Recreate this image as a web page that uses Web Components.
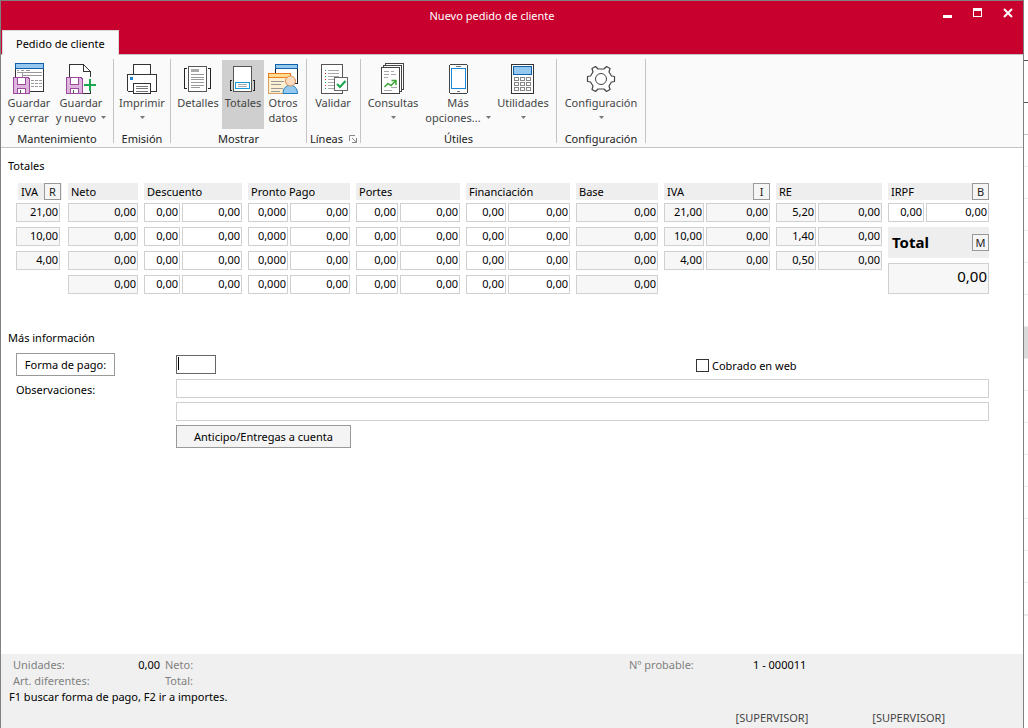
<!DOCTYPE html>
<html lang="es">
<head>
<meta charset="utf-8">
<title>Nuevo pedido de cliente</title>
<style>
  html, body { margin: 0; height: 100%; }
  body { font: 11px/15px "Noto Sans", "Open Sans", sans-serif; color: #000; background: #fff; }
</style>
</head>
<body>
<order-window></order-window>

<script>
const define = (name, html, init) => {
  const tpl = document.createElement('template');
  tpl.innerHTML = html;
  customElements.define(name, class extends HTMLElement {
    constructor() {
      super();
      this.attachShadow({ mode: 'open' }).append(tpl.content.cloneNode(true));
    }
    connectedCallback() {
      if (init && !this.ready) { this.ready = true; init(this, this.shadowRoot); }
    }
  });
};

/* ---------- icons ---------- */
const floppy = (x) => `<g transform="translate(${x} 14)">
  <path d="M.5 .5H15L16.500 2V16.500H.5Z" fill="#deb5dc" stroke="#9b4a9d"/>
  <path d="M4.500 .5V7.500H12.500V.5Z" fill="#fff" stroke="#9b4a9d"/>
  <path d="M4.500 16.500V11.500H12.500V16.500Z" fill="#fff" stroke="#9b4a9d"/>
  <path d="M7.500 16V13" stroke="#555" fill="none"/></g>`;
const ICONS = {
  saveClose: `<path d="M2.500 5.500H30.500V28.500H2.500Z" fill="#fff" stroke="#333"/>
    <path d="M2.500 .5H30.500V5.500H2.500Z" fill="#94c8ee" stroke="#0f61ab"/>
    <path d="M4 7.500H6M8 7.500H11M13 7.500H17M4 9.500H29M9 12.500H29" stroke="#999"/>
    <path d="M9.500 10V14" stroke="#999"/><path d="M18 17.500H29M18 20.500H29M18 23.500H29" stroke="#999" stroke-dasharray="3 1"/>${floppy(0)}`,
  saveNew: `<path d="M4.500 24V1.500H18.500L25.500 8.500V30.500H18" fill="#fff" stroke="#333"/>
    <path d="M18.500 1.500V8.500H25.500" fill="none" stroke="#333"/>
    <path d="M20 14H32V30H20Z" fill="#fafafa"/><path d="M25.500 9V14M18 30.500H25.500V28" stroke="#333" fill="none"/>
    ${floppy(1)}
    <path d="M25 16V28M19 22H31" stroke="#19a84f" stroke-width="2"/>`,
  print: `<path d="M7.500 11V1.500H24.500V11" fill="#fff" stroke="#333"/>
    <path d="M1.500 11.500H30.500V29.500H1.500Z" fill="#fff" stroke="#333"/>
    <path d="M0 28H32V32H0Z" fill="#fafafa"/><path d="M1.500 28.500H30.500" stroke="#333"/>
    <path d="M4 14H7V17H4Z" fill="#1c86d6"/>
    <path d="M7.500 20.500H24.500V30.500H7.500Z" fill="#fff" stroke="#333"/>
    <path d="M10 23.500H22M10 25.500H22M10 28.500H22" stroke="#777"/>`,
  details: `<path d="M6.500 3.500H24.500V28.500H6.500Z" fill="#fff" stroke="#555"/>
    <path d="M9 6H17V9H9Z" fill="#aaa"/>
    <path d="M9 11.500H22M9 14.500H22M9 16.500H22M9 19.500H22M9 22.500H22M9 24.500H18" stroke="#999"/>
    <path d="M5 5.500H2.500V25.500H5M26 5.500H28.500V25.500H26" fill="none" stroke="#222"/>`,
  totals: `<path d="M6.500 3.500H24.500V28.500H6.500Z" fill="#fff" stroke="#555"/>
    <path d="M8.500 19.500H22.500V25.500H8.500Z" fill="#fff" stroke="#159bdc"/>
    <path d="M11 21.500H20M11 23.500H20" stroke="#aaa"/>
    <path d="M5 17.500H3.500V27.500H5M26 17.500H27.500V27.500H26" fill="none" stroke="#222"/>`,
  other: `<path d="M8.500 4.500H30.500V20.500H8.500Z" fill="#fff" stroke="#222"/>
    <path d="M8.500 1.500H30.500V5.500H8.500Z" fill="#94c8ee" stroke="#0f61ab"/>
    <path d="M1.500 13.500H22.500V30.500H1.500Z" fill="#fdf0d2" stroke="#d9a066"/>
    <path d="M1.500 10.500H23.500V14.500H1.500Z" fill="#ffdc91" stroke="#ea7d1e"/>
    <path d="M4 18.500H17M4 21.500H14M4 25.500H16M4 28.500H13" stroke="#999"/>
    <g shape-rendering="auto"><path d="M16 30.500C16 19.500 30.500 19.500 30.500 30.500Z" fill="#94c8ee" stroke="#1c7cc0"/>
    <circle cx="23.500" cy="18" r="5" fill="#fbdcc0" stroke="#d98f5c"/></g>`,
  validate: `<path d="M25.500 14V1.500H4.500V30.500H25.500V28" fill="#fff" stroke="#555"/>
    <path d="M11 7.500H22M11 10.500H22M11 13.500H22M11 16.500H17M11 19.500H17M11 22.500H17M11 25.500H17" stroke="#aaa"/>
    <path d="M8 7.500H9M8 13.500H9M8 19.500H9M8 25.500H9" stroke="#19a84f"/><path d="M8 10.500H9M8 16.500H9M8 22.500H9" stroke="#d02a2a"/>
    <path d="M17.500 14.500H30.500V27.500H17.500Z" fill="#fff" stroke="#666"/>
    <path d="M20 21L23 24L28.500 18" stroke="#19a84f" stroke-width="2" fill="none" shape-rendering="auto"/>`,
  queries: `<path d="M8.500 .5H26.500V26.500H8.500Z" fill="#fff" stroke="#444"/>
    <path d="M6.500 2.500H24.500V28.500H6.500Z" fill="#fff" stroke="#444"/>
    <path d="M4.500 4.500H22.500V30.500H4.500Z" fill="#fff" stroke="#444"/>
    <path d="M7 8.500H12M14 8.500H17M7 11.500H12M14 11.500H19M7 14.500H11M7 27.500H15M14 24.500H20" stroke="#aaa"/>
    <g shape-rendering="auto"><path d="M7.500 24L11 20.500L14 22.500L19 17.500M14.500 17.500H19V22" fill="none" stroke="#3fa535" stroke-width="1.500"/></g>`,
  phone: `<rect x="7.500" y="1.500" width="18" height="29" rx="2" fill="#fff" stroke="#444"/>
    <path d="M9.500 5.500H23.500V25.500H9.500Z" fill="#fff" stroke="#1c86d6"/>
    <path d="M14 3.500H19M15 28.500H18" stroke="#777"/>`,
  calc: `<path d="M4.500 1.500H26.500V30.500H4.500Z" fill="#fff" stroke="#333"/>
    <path d="M6.500 3.500H24.500V11.500H6.500Z" fill="#94c8ee" stroke="#0f61ab"/>
    ${[14, 19, 24].map(y => [7, 13, 19].map(x => `<path d="M${x}.5 ${y}.5h4v3h-4Z" fill="#fff" stroke="#888"/>`).join('')).join('')}`,
  gear: `<g shape-rendering="auto" fill="none" stroke="#444">
    <path d="M10.500 3.500L7 5.500L8 9L5.500 13L2.500 13.500V18.500L5.500 19L8 23L7 26.500L10.500 28.500L13 26H19L21.500 28.500L25 26.500L24 23L26.500 19L29.500 18.500V13.500L26.500 13L24 9L25 5.500L21.500 3.500L19 6H13Z" fill="#fff" stroke-width="1.200" stroke-linejoin="round"/><circle cx="16" cy="16" r="5.500"/></g>`
};

/* ---------- title bar ---------- */
define('title-bar', `
<style>
  :host { display: grid; grid-template-columns: 1fr auto 1fr 40px; height: 29px; background: #c8002d; color: #fff; line-height: 29px; }
  h1 { margin: 0; font: inherit; grid-column: 2; }
  .tools { grid-column: 3 / 5; justify-self: end; display: flex; }
  button { width: 30px; height: 24px; padding: 0; border: 0; background: none; color: #fff; }
  svg { display: block; margin: auto; }
</style>
<h1><slot></slot></h1>
<div class="tools">
  <button aria-label="Minimizar"><svg width="10" height="10"><path d="M0 7H9V10H0Z" fill="#fff"/></svg></button>
  <button aria-label="Maximizar"><svg width="10" height="10"><path d="M0 0H9V9H0ZM1 3V8H8V3Z" fill="#fff" fill-rule="evenodd"/></svg></button>
  <button aria-label="Cerrar"><svg width="10" height="10"><path d="M1 1L9 9M9 1L1 9" stroke="#fff" stroke-width="2"/></svg></button>
</div>`);

/* ---------- ribbon ---------- */
define('ribbon-tabs', `
<style>
  :host { display: flex; height: 24px; background: #c8002d; padding-left: 1px; border-bottom: 1px solid #c4c4c4; }
  button { box-sizing: border-box; height: 25px; margin-bottom: -1px; padding: 0 13px; font: inherit; color: #000; background: #fafafa; border: 1px solid #d8d8d8; border-bottom: 0; }
</style>
<button role="tab" aria-selected="true"><slot></slot></button>`);

define('ribbon-bar', `
<style>
  :host { display: flex; height: 92px; background: #fafafa; border-bottom: 1px solid #c4c4c4; }
</style><slot></slot>`);

define('ribbon-group', `
<style>
  :host { display: flex; flex-direction: column; align-items: center; box-sizing: border-box; height: 88px; margin-top: 4px; padding: 1px 4px 0 3px;
    background: linear-gradient(#c4c4c4, #c4c4c4) right top / 1px 84px no-repeat; }
  .items { display: flex; flex: none; align-self: flex-start; height: 70px; }
  .caption { display: flex; flex: none; align-items: center; gap: 6px; height: 17px; line-height: 17px; color: #222; }
  button { padding: 0; border: 0; background: none; height: 8px; display: none; }
  :host([launcher]) button { display: block; }
  svg { display: block; }
</style>
<div class="items"><slot></slot></div>
<div class="caption"><span></span><button aria-label="Más opciones del grupo"><svg width="8" height="8"><path d="M.5 6V.5H6M3 3L7 7M7.500 3V7.500H3" fill="none" stroke="#888"/></svg></button></div>`,
(el, root) => { root.querySelector('span').textContent = el.getAttribute('label'); });

define('ribbon-button', `
<style>
  :host { display: block; width: var(--w, 52px); }
  button { display: flex; flex-direction: column; align-items: center; width: 100%; height: 69px; padding: 3px 0 0; border: 0; background: none; font: inherit; color: #444; white-space: nowrap; }
  :host([active]) button { background: #cfcfcf; }
  svg { display: block; flex: none; }
  .line { display: flex; align-items: center; justify-content: center; height: 15px; gap: 5px; }
  .arrow { display: none; }
  :host([menu]) .arrow { display: block; }
</style>
<button><svg class="icon" width="32" height="32" viewBox="0 0 32 32" fill="none" shape-rendering="crispEdges"></svg>
<span class="line"><slot></slot></span>
<span class="line"><slot name="second"></slot><svg class="arrow" width="5" height="3"><path d="M0 0H5L2.500 3Z" fill="#777"/></svg></span></button>`,
(el, root) => {
  root.querySelector('.icon').innerHTML = ICONS[el.getAttribute('icon')];
  if (el.hasAttribute('active')) root.querySelector('button').setAttribute('aria-pressed', 'true');
});

/* ---------- form pieces ---------- */
define('key-button', `
<style>
  :host { display: block; }
  button { display: block; box-sizing: border-box; width: 17px; height: 17px; padding: 0; border: 1px solid #999; background: #f5f5f5; font: inherit; line-height: 14px; color: #222; }
</style><button><slot></slot></button>`);

/* A titled column of amounts; rows are separated by "|" and cells by a space. */
define('amount-column', `
<style>
  :host { display: block; min-width: 0; }
  .head { display: flex; justify-content: space-between; align-items: center; height: 17px; margin-bottom: 3px; background: #eee; padding-left: 3px; white-space: nowrap; }
  .row { display: flex; gap: 2px; margin-bottom: 5px; }
  input { box-sizing: border-box; flex: 1; min-width: 0; height: 19px; margin: 0; padding: 0 1px 2px; border: 1px solid #d0d0d0; border-radius: 0; background: #fff; font: inherit; text-align: right; color: #000; outline: 0; }
  input:first-child:not(:last-child) { flex: 0 0 var(--first, 40px); }
  input:read-only { background: #f7f7f7; }
  :host([rate]) .head { margin-left: 2px; padding-right: 1px; }
  :host([rate]) .rows { margin-right: 2px; }
</style>
<div class="head"><span></span><slot name="key"></slot></div>
<div class="rows"></div>
<slot></slot>`,
(el, root) => {
  const label = el.getAttribute('label');
  root.querySelector('.head span').textContent = label;
  const rows = root.querySelector('.rows');
  el.getAttribute('values').split('|').forEach((line, i) => {
    const row = document.createElement('div');
    row.className = 'row';
    line.split(' ').forEach((value, j) => {
      const input = document.createElement('input');
      input.value = value;
      input.readOnly = el.hasAttribute('locked');
      input.setAttribute('aria-label', `${label} ${i + 1}.${j + 1}`);
      row.append(input);
    });
    rows.append(row);
  });
});

define('grand-total', `
<style>
  :host { display: block; }
  .head { display: flex; justify-content: space-between; align-items: center; height: 31px; margin-bottom: 5px; padding-left: 4px; background: #eee; }
  label { font-size: 15px; font-weight: 700; }
  input { display: block; box-sizing: border-box; width: 100%; height: 31px; margin: 0; padding: 0 1px 6px; border: 1px solid #d0d0d0; background: #f7f7f7; font: inherit; font-size: 15px; color: #000; text-align: right; outline: 0; }
</style>
<div class="head"><label for="t">Total</label><key-button>M</key-button></div>
<input id="t" value="0,00" readonly>`);

define('totals-panel', `
<style>
  :host { display: block; padding: 10px 34px 0 7px; }
  h2 { margin: 0 0 10px; font: inherit; }
  .grid { display: grid; column-gap: 6px; margin-left: 8px;
    grid-template-columns: 46fr 70fr 98fr 102fr 104fr 104fr 82fr 106fr 106fr 101fr; }
  .narrow { --first: 36px; }
  .wide { --first: 42px; }
</style>
<h2>Totales</h2>
<div class="grid">
  <amount-column label="IVA" values="21,00|10,00|4,00" locked rate><key-button slot="key">R</key-button></amount-column>
  <amount-column label="Neto" values="0,00|0,00|0,00|0,00" locked></amount-column>
  <amount-column class="narrow" label="Descuento" values="0,00 0,00|0,00 0,00|0,00 0,00|0,00 0,00"></amount-column>
  <amount-column label="Pronto Pago" values="0,000 0,00|0,000 0,00|0,000 0,00|0,000 0,00"></amount-column>
  <amount-column class="wide" label="Portes" values="0,00 0,00|0,00 0,00|0,00 0,00|0,00 0,00"></amount-column>
  <amount-column label="Financiación" values="0,00 0,00|0,00 0,00|0,00 0,00|0,00 0,00"></amount-column>
  <amount-column label="Base" values="0,00|0,00|0,00|0,00" locked></amount-column>
  <amount-column label="IVA" values="21,00 0,00|10,00 0,00|4,00 0,00" locked><key-button slot="key">I</key-button></amount-column>
  <amount-column label="RE" values="5,20 0,00|1,40 0,00|0,50 0,00" locked></amount-column>
  <amount-column class="narrow" label="IRPF" values="0,00 0,00"><key-button slot="key">B</key-button><grand-total></grand-total></amount-column>
</div>`);

define('more-info', `
<style>
  :host { display: block; padding: 31px 34px 0 7px; }
  h2 { margin: 0 0 8px; font: inherit; }
  .form { display: grid; grid-template-columns: 160px minmax(0, 1fr); margin-left: 8px; align-items: center; }
  button { box-sizing: border-box; height: 23px; padding: 0; border: 1px solid #999; background: #fff; font: inherit; color: #000; }
  .pay { width: 99px; }
  .advance { width: 175px; background: #f4f4f4; margin-top: 4px; grid-column: 2; }
  input { box-sizing: border-box; margin: 0; height: 19px; font: inherit; border: 1px solid #d0d0d0; background: #fff; outline: 0; padding: 0 2px; }
  .code { width: 40px; border-color: #666; }
  .top { display: flex; align-items: center; justify-content: space-between; }
  .check { display: flex; align-items: center; gap: 3px; width: 293px; padding-top: 2px; }
  .check input { appearance: none; width: 13px; height: 13px; padding: 0; border-color: #333; }
  .field { position: relative; display: flex; }
  .caret { position: absolute; left: 2px; top: 2px; width: 1px; height: 13px; background: #000; }
  .notes { width: 100%; }
  .second { margin-top: 4px; grid-column: 2; }
  .first { margin-top: 3px; }
  .form > label { padding-top: 4px; }
</style>
<h2>Más información</h2>
<div class="form">
  <button class="pay">Forma de pago:</button>
  <div class="top">
    <span class="field"><input class="code" aria-label="Forma de pago"><span class="caret"></span></span>
    <label class="check"><input type="checkbox">Cobrado en web</label>
  </div>
  <label for="notes1">Observaciones:</label>
  <input class="notes first" id="notes1">
  <input class="notes second" aria-label="Observaciones, segunda línea">
  <button class="advance">Anticipo/Entregas a cuenta</button>
</div>`);

define('status-bar', `
<style>
  :host { display: block; padding: 3px 8px 2px; background: #f0f0f0; line-height: 16px; }
  .facts { display: grid; grid-template-columns: 107px 40px 469px 124px 1fr; padding-left: 4px; color: #808080; }
  .facts b { font-weight: 400; color: #000; }
  .num { text-align: right; }
  .facts span:nth-child(3), .facts .total { padding-left: 5px; }
  .total { grid-column: 3; }
  p { margin: 0; }
  .users { display: flex; justify-content: flex-end; gap: 64px; margin-top: 5px; padding-right: 70px; color: #444; }
</style>
<div class="facts">
  <span>Unidades:</span><b class="num">0,00</b><span>Neto:</span><span>Nº probable:</span><b>1 - 000011</b>
  <span>Art. diferentes:</span><span class="total">Total:</span>
</div>
<p>F1 buscar forma de pago, F2 ir a importes.</p>
<div class="users"><span>[SUPERVISOR]</span><span>[SUPERVISOR]</span></div>`);

/* ---------- window ---------- */
define('order-window', `
<style>
  :host { display: grid; grid-template-columns: minmax(0, 1fr) 4px; min-height: 100vh; }
  .window { display: flex; flex-direction: column; border: 1px solid #808080; border-bottom: 0; background: #fff; }
  main { flex: 1; }
  .behind { background:
    linear-gradient(#555, #555) 0 60px / 4px 1px no-repeat,
    linear-gradient(#555, #555) 0 102px / 4px 1px no-repeat,
    linear-gradient(#c4c4c4, #c4c4c4) 0 134px / 4px 1px no-repeat,
    linear-gradient(#dadada, #dadada) 0 327px / 4px 31px no-repeat,
    linear-gradient(#ececec, #ececec) 0 614px / 4px 2px no-repeat,
    repeating-linear-gradient(#fff 0 6px, #ececec 6px 7px, #fff 7px 32px) 0 160px / 4px 424px no-repeat; }
</style>
<div class="window">
  <title-bar>Nuevo pedido de cliente</title-bar>
  <ribbon-tabs>Pedido de cliente</ribbon-tabs>
  <ribbon-bar>
    <ribbon-group label="Mantenimiento" style="width:113px">
      <ribbon-button icon="saveClose" style="--w:50px">Guardar<span slot="second">y cerrar</span></ribbon-button>
      <ribbon-button icon="saveNew" menu style="--w:54px">Guardar<span slot="second">y nuevo</span></ribbon-button>
    </ribbon-group>
    <ribbon-group label="Emisión" style="width:57px"><ribbon-button icon="print" menu style="--w:50px">Imprimir</ribbon-button></ribbon-group>
    <ribbon-group label="Mostrar" style="width:136px">
      <ribbon-button icon="details" style="--w:48px">Detalles</ribbon-button>
      <ribbon-button icon="totals" active style="--w:42px">Totales</ribbon-button>
      <ribbon-button icon="other" style="--w:38px">Otros<span slot="second">datos</span></ribbon-button>
    </ribbon-group>
    <ribbon-group label="Líneas" launcher style="width:54px"><ribbon-button icon="validate" style="--w:46px">Validar</ribbon-button></ribbon-group>
    <ribbon-group label="Útiles" style="width:196px">
      <ribbon-button icon="queries" menu style="--w:58px">Consultas</ribbon-button>
      <ribbon-button icon="phone" menu style="--w:72px">Más<span slot="second">opciones...</span></ribbon-button>
      <ribbon-button icon="calc" menu style="--w:58px">Utilidades</ribbon-button>
    </ribbon-group>
    <ribbon-group label="Configuración" style="width:89px"><ribbon-button icon="gear" menu style="--w:82px">Configuración</ribbon-button></ribbon-group>
  </ribbon-bar>
  <main>
    <totals-panel></totals-panel>
    <more-info></more-info>
  </main>
  <status-bar></status-bar>
</div>
<div class="behind" aria-hidden="true"></div>`);
</script>
</body>
</html>
